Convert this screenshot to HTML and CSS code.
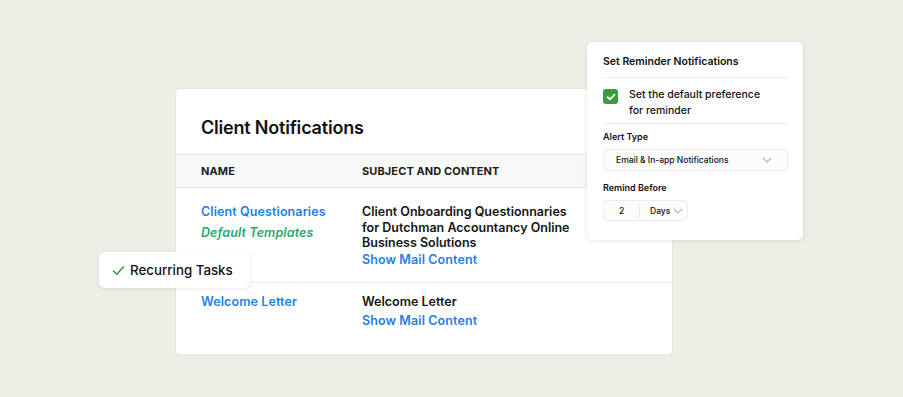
FILE: index.html
```html
<!DOCTYPE html>
<html lang="en">
<head>
  <meta charset="UTF-8" />
  <title>Client Notifications</title>
  <link rel="stylesheet" href="styles.css">
</head>
<body>
  <div class="stage">
    <div class="card">
      <h2 class="card-title">Client Notifications</h2>

      <div class="row head">
        <div class="col-name">NAME</div>
        <div class="col-subject">SUBJECT AND CONTENT</div>
      </div>

      <div class="row first">
        <div class="col-name">
          <a class="link">Client Questionaries</a>
          <div class="tag">Default Templates</div>
        </div>
        <div class="col-subject">
          <div class="subject">Client Onboarding Questionnaries for Dutchman Accountancy Online Business Solutions</div>
          <a class="link">Show Mail Content</a>
        </div>
      </div>

      <div class="row last">
        <div class="col-name">
          <a class="link">Welcome Letter</a>
        </div>
        <div class="col-subject">
          <div class="subject">Welcome Letter</div>
          <a class="link show">Show Mail Content</a>
        </div>
      </div>
    </div>

    <div class="chip">
      <svg width="13" height="11" viewBox="0 0 13 11"><path d="M1.5 6 L4.8 9.2 L11.5 1.8" fill="none" stroke="#3d9a3f" stroke-width="1.6" stroke-linecap="round" stroke-linejoin="round"/></svg>
      <span>Recurring Tasks</span>
    </div>

    <div class="popup">
      <div class="popup-title">Set Reminder Notifications</div>
      <div class="check-row">
        <span class="checkbox">
          <svg width="10" height="8" viewBox="0 0 10 8"><path d="M1.5 4.2 L3.9 6.3 L8.5 1.7" fill="none" stroke="#fff" stroke-width="1.7" stroke-linecap="round" stroke-linejoin="round"/></svg>
        </span>
        <span>Set the default preference<br>for reminder</span>
      </div>
      <div class="field-label">Alert Type</div>
      <div class="select">
        <span>Email &amp; In-app Notifications</span>
        <svg width="10" height="6" viewBox="0 0 10 6"><path d="M1 1 L5 5 L9 1" fill="none" stroke="#b5b5b5" stroke-width="1.2"/></svg>
      </div>
      <div class="field-label">Remind Before</div>
      <div class="duration">
        <span class="num">2</span>
        <span class="sep"></span>
        <span>Days</span>
        <svg width="10" height="6" viewBox="0 0 10 6"><path d="M1 1 L5 5 L9 1" fill="none" stroke="#b5b5b5" stroke-width="1.2"/></svg>
      </div>
    </div>
  </div>
</body>
</html>
```

FILE: styles.css
```css
body {
  margin: 0;
  background: #eeeee6;
  font-family: Inter, 'Noto Sans', sans-serif;
  color: #111;
}

.stage {
  position: relative;
  width: 903px;
  height: 397px;
  padding: 88px 0 0 175px;
  box-sizing: border-box;
}

.card {
  width: 498px;
  background: #fff;
  border: 1px solid #e6e6df;
  border-radius: 5px;
  box-sizing: border-box;
}

.card-title {
  margin: 0;
  padding: 28px 25px 15px;
  font-size: 18px;
  line-height: 22px;
  font-weight: 600;
  letter-spacing: -0.2px;
}

.row {
  display: flex;
  padding: 0 25px;
}

.col-name {
  width: 161px;
}

.col-subject {
  flex: 1;
}

.head {
  height: 32px;
  align-items: center;
  background: #f8f8f7;
  border-top: 1px solid #e7e7e3;
  border-bottom: 1px solid #e7e7e3;
  font-size: 11px;
  font-weight: 700;
  letter-spacing: 0.1px;
  color: #1c1c1c;
}

.first {
  padding-top: 16px;
  padding-bottom: 14px;
  border-bottom: 1px solid #eeeeea;
}

.last {
  padding-top: 11px;
  height: 71px;
  box-sizing: border-box;
}

.link {
  display: block;
  color: #1f80e6;
  font-size: 12.5px;
  font-weight: 600;
  line-height: 16px;
  letter-spacing: 0.1px;
}

.tag {
  margin-top: 5px;
  color: #2aa86b;
  font-size: 12.5px;
  font-weight: 600;
  font-style: italic;
  letter-spacing: 0.1px;
  line-height: 16px;
}

.subject {
  font-size: 12.5px;
  font-weight: 600;
  line-height: 15.5px;
  letter-spacing: 0;
  color: #151515;
  width: 215px;
  margin-bottom: 1px;
}

.show {
  margin-top: 4px;
}

.chip {
  position: absolute;
  left: 99px;
  top: 252px;
  width: 151px;
  height: 36px;
  box-sizing: border-box;
  display: flex;
  align-items: center;
  gap: 5px;
  padding-left: 13px;
  background: #fff;
  border-radius: 6px;
  box-shadow: 0 1px 4px rgba(0, 0, 0, 0.1);
  font-size: 13.3px;
  font-weight: 500;
}

.popup {
  position: absolute;
  left: 587px;
  top: 42px;
  width: 216px;
  height: 198px;
  box-sizing: border-box;
  padding: 13px 15px 0 16px;
  background: #fff;
  border-radius: 6px;
  box-shadow: 0 1px 5px rgba(0, 0, 0, 0.1);
}

.popup-title {
  font-size: 10.5px;
  font-weight: 600;
  line-height: 14px;
  padding-bottom: 8px;
  border-bottom: 1px solid #ececec;
}

.check-row {
  display: flex;
  gap: 11px;
  padding: 9px 0 4px;
  border-bottom: 1px solid #ececec;
  font-size: 10.5px;
  line-height: 16px;
  font-weight: 500;
}

.checkbox {
  flex: none;
  width: 15px;
  height: 15px;
  margin-top: 2px;
  border-radius: 3px;
  background: #3d9a3f;
  display: flex;
  align-items: center;
  justify-content: center;
}

.field-label {
  font-size: 9px;
  font-weight: 600;
  line-height: 12px;
  margin: 7px 0 6px;
}

.select {
  height: 20px;
  display: flex;
  align-items: center;
  justify-content: space-between;
  padding: 0 15px 0 12px;
  border: 1px solid #ececec;
  border-radius: 4px;
  background: #fcfcfb;
  font-size: 8.5px;
  font-weight: 500;
  margin-bottom: 11px;
}

.duration {
  width: 85px;
  height: 21px;
  box-sizing: border-box;
  display: flex;
  align-items: center;
  border: 1px solid #ececec;
  border-radius: 4px;
  background: #fcfcfb;
  font-size: 8.5px;
  font-weight: 500;
}

.duration .num {
  width: 35px;
  text-align: center;
}

.duration .sep {
  width: 1px;
  height: 14px;
  background: #ececec;
  margin-right: 10px;
}

.duration svg {
  margin-left: 3px;
}
```
